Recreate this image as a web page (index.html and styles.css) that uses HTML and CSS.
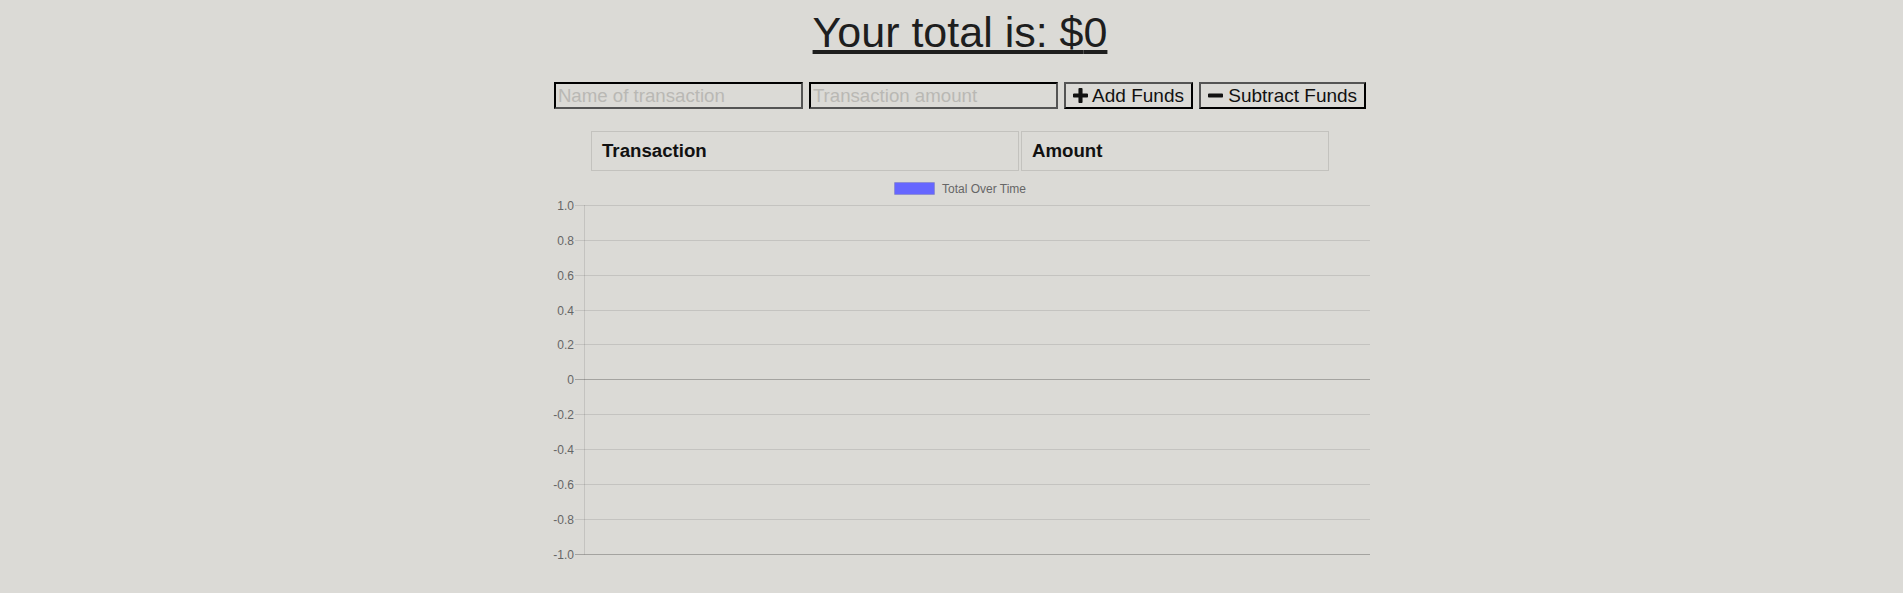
FILE: index.html
```html
<!DOCTYPE html>
<html lang="en">
<head>
<meta charset="utf-8">
<title>Budget Tracker</title>
<link rel="stylesheet" href="styles.css">
</head>
<body>
<div class="page">
  <h1 class="total">Your total is: $<span class="total-value">0</span></h1>

  <div class="controls">
    <input class="field" type="text" placeholder="Name of transaction">
    <input class="field" type="number" placeholder="Transaction amount">
    <button class="btn" type="button"><svg class="icon" viewBox="0 192 1408 1408" aria-hidden="true"><path d="M1408 800v192q0 40-28 68t-68 28h-416v416q0 40-28 68t-68 28h-192q-40 0-68-28t-28-68v-416h-416q-40 0-68-28t-28-68v-192q0-40 28-68t68-28h416v-416q0-40 28-68t68-28h192q40 0 68 28t28 68v416h416q40 0 68 28t28 68z"/></svg> Add Funds</button>
    <button class="btn" type="button"><svg class="icon" viewBox="0 192 1408 1408" aria-hidden="true"><path d="M1408 800v192q0 40-28 68t-68 28h-1216q-40 0-68-28t-28-68v-192q0-40 28-68t68-28h1216q40 0 68 28t28 68z"/></svg> Subtract Funds</button>
  </div>

  <table class="transactions">
    <thead>
      <tr>
        <th class="col-name">Transaction</th>
        <th class="col-amount">Amount</th>
      </tr>
    </thead>
    <tbody></tbody>
  </table>

  <svg class="chart" width="822" height="420" viewBox="0 0 822 420">
    <g class="legend">
      <rect x="345.5" y="9.5" width="40" height="12" fill="#6666ff" stroke="rgba(0,0,0,0.1)" stroke-width="1"/>
      <text x="393" y="20" class="legend-text">Total Over Time</text>
    </g>
    <g class="grid" stroke="rgba(0,0,0,0.1)" stroke-width="1">
      <line x1="26" y1="32.5" x2="821" y2="32.5"/>
      <line x1="26" y1="67.5" x2="821" y2="67.5"/>
      <line x1="26" y1="102.5" x2="821" y2="102.5"/>
      <line x1="26" y1="137.5" x2="821" y2="137.5"/>
      <line x1="26" y1="171.5" x2="821" y2="171.5"/>
      <line x1="26" y1="241.5" x2="821" y2="241.5"/>
      <line x1="26" y1="276.5" x2="821" y2="276.5"/>
      <line x1="26" y1="311.5" x2="821" y2="311.5"/>
      <line x1="26" y1="346.5" x2="821" y2="346.5"/>
      <line x1="35.5" y1="32" x2="35.5" y2="381.5"/>
    </g>
    <g stroke="rgba(0,0,0,0.25)" stroke-width="1">
      <line x1="26" y1="206.5" x2="821" y2="206.5"/>
      <line x1="26" y1="381.5" x2="821" y2="381.5"/>
    </g>
    <g class="ticks">
      <text x="25" y="32.5">1.0</text>
      <text x="25" y="67.5">0.8</text>
      <text x="25" y="102.5">0.6</text>
      <text x="25" y="137.5">0.4</text>
      <text x="25" y="171.5">0.2</text>
      <text x="25" y="206.5">0</text>
      <text x="25" y="241.5">-0.2</text>
      <text x="25" y="276.5">-0.4</text>
      <text x="25" y="311.5">-0.6</text>
      <text x="25" y="346.5">-0.8</text>
      <text x="25" y="381.5">-1.0</text>
    </g>
  </svg>
</div>
</body>
</html>
```

FILE: styles.css
```css
* {
  box-sizing: border-box;
}

body {
  margin: 0;
  padding: 8px 0 0 17px;
  background: #dbdad6;
  font-family: "Liberation Sans", Arial, sans-serif;
  color: #111;
}

.page {
  width: 822px;
  margin: 0 auto;
}

.total {
  margin: 0;
  font-size: 43px;
  font-weight: normal;
  line-height: 49px;
  text-align: center;
  text-decoration: underline;
  color: #1e1e1e;
}

.controls {
  display: flex;
  justify-content: center;
  gap: 6px;
  margin-top: 25px;
  height: 27px;
}

.field {
  width: 249px;
  height: 27px;
  margin: 0;
  padding: 1px 2px;
  font-family: "Liberation Sans", Arial, sans-serif;
  font-size: 18.67px;
  color: #222;
  background: transparent;
  border-style: solid;
  border-width: 2px;
  border-color: #000 #545454 #545454 #000;
  outline: none;
  -moz-appearance: textfield;
}

.field::-webkit-outer-spin-button,
.field::-webkit-inner-spin-button {
  -webkit-appearance: none;
  margin: 0;
}

.field::placeholder {
  color: #b9b8b4;
}

.btn {
  height: 27px;
  margin: 0;
  padding: 0 7px;
  font-family: "Liberation Sans", Arial, sans-serif;
  font-size: 19px;
  line-height: 21px;
  color: #111;
  background: transparent;
  border-style: solid;
  border-width: 2px;
  border-color: #545454 #000 #000 #545454;
  white-space: nowrap;
}

.icon {
  width: 15px;
  height: 15px;
  fill: #111;
  vertical-align: -1px;
}

.transactions {
  width: 742px;
  margin: 20px auto 0;
  border-spacing: 2px;
  table-layout: fixed;
}

.transactions th {
  padding: 8px 10px;
  line-height: 22px;
  font-size: 18.67px;
  font-weight: bold;
  text-align: left;
  color: #111;
  border: 1px solid #c3c2be;
}

.col-name {
  width: 428px;
}

.chart {
  display: block;
}

.legend-text {
  font-family: "Liberation Sans", Arial, sans-serif;
  font-size: 12px;
  fill: #666;
}

.ticks text {
  font-family: "Liberation Sans", Arial, sans-serif;
  font-size: 12px;
  fill: #666;
  text-anchor: end;
  dominant-baseline: central;
}
```
